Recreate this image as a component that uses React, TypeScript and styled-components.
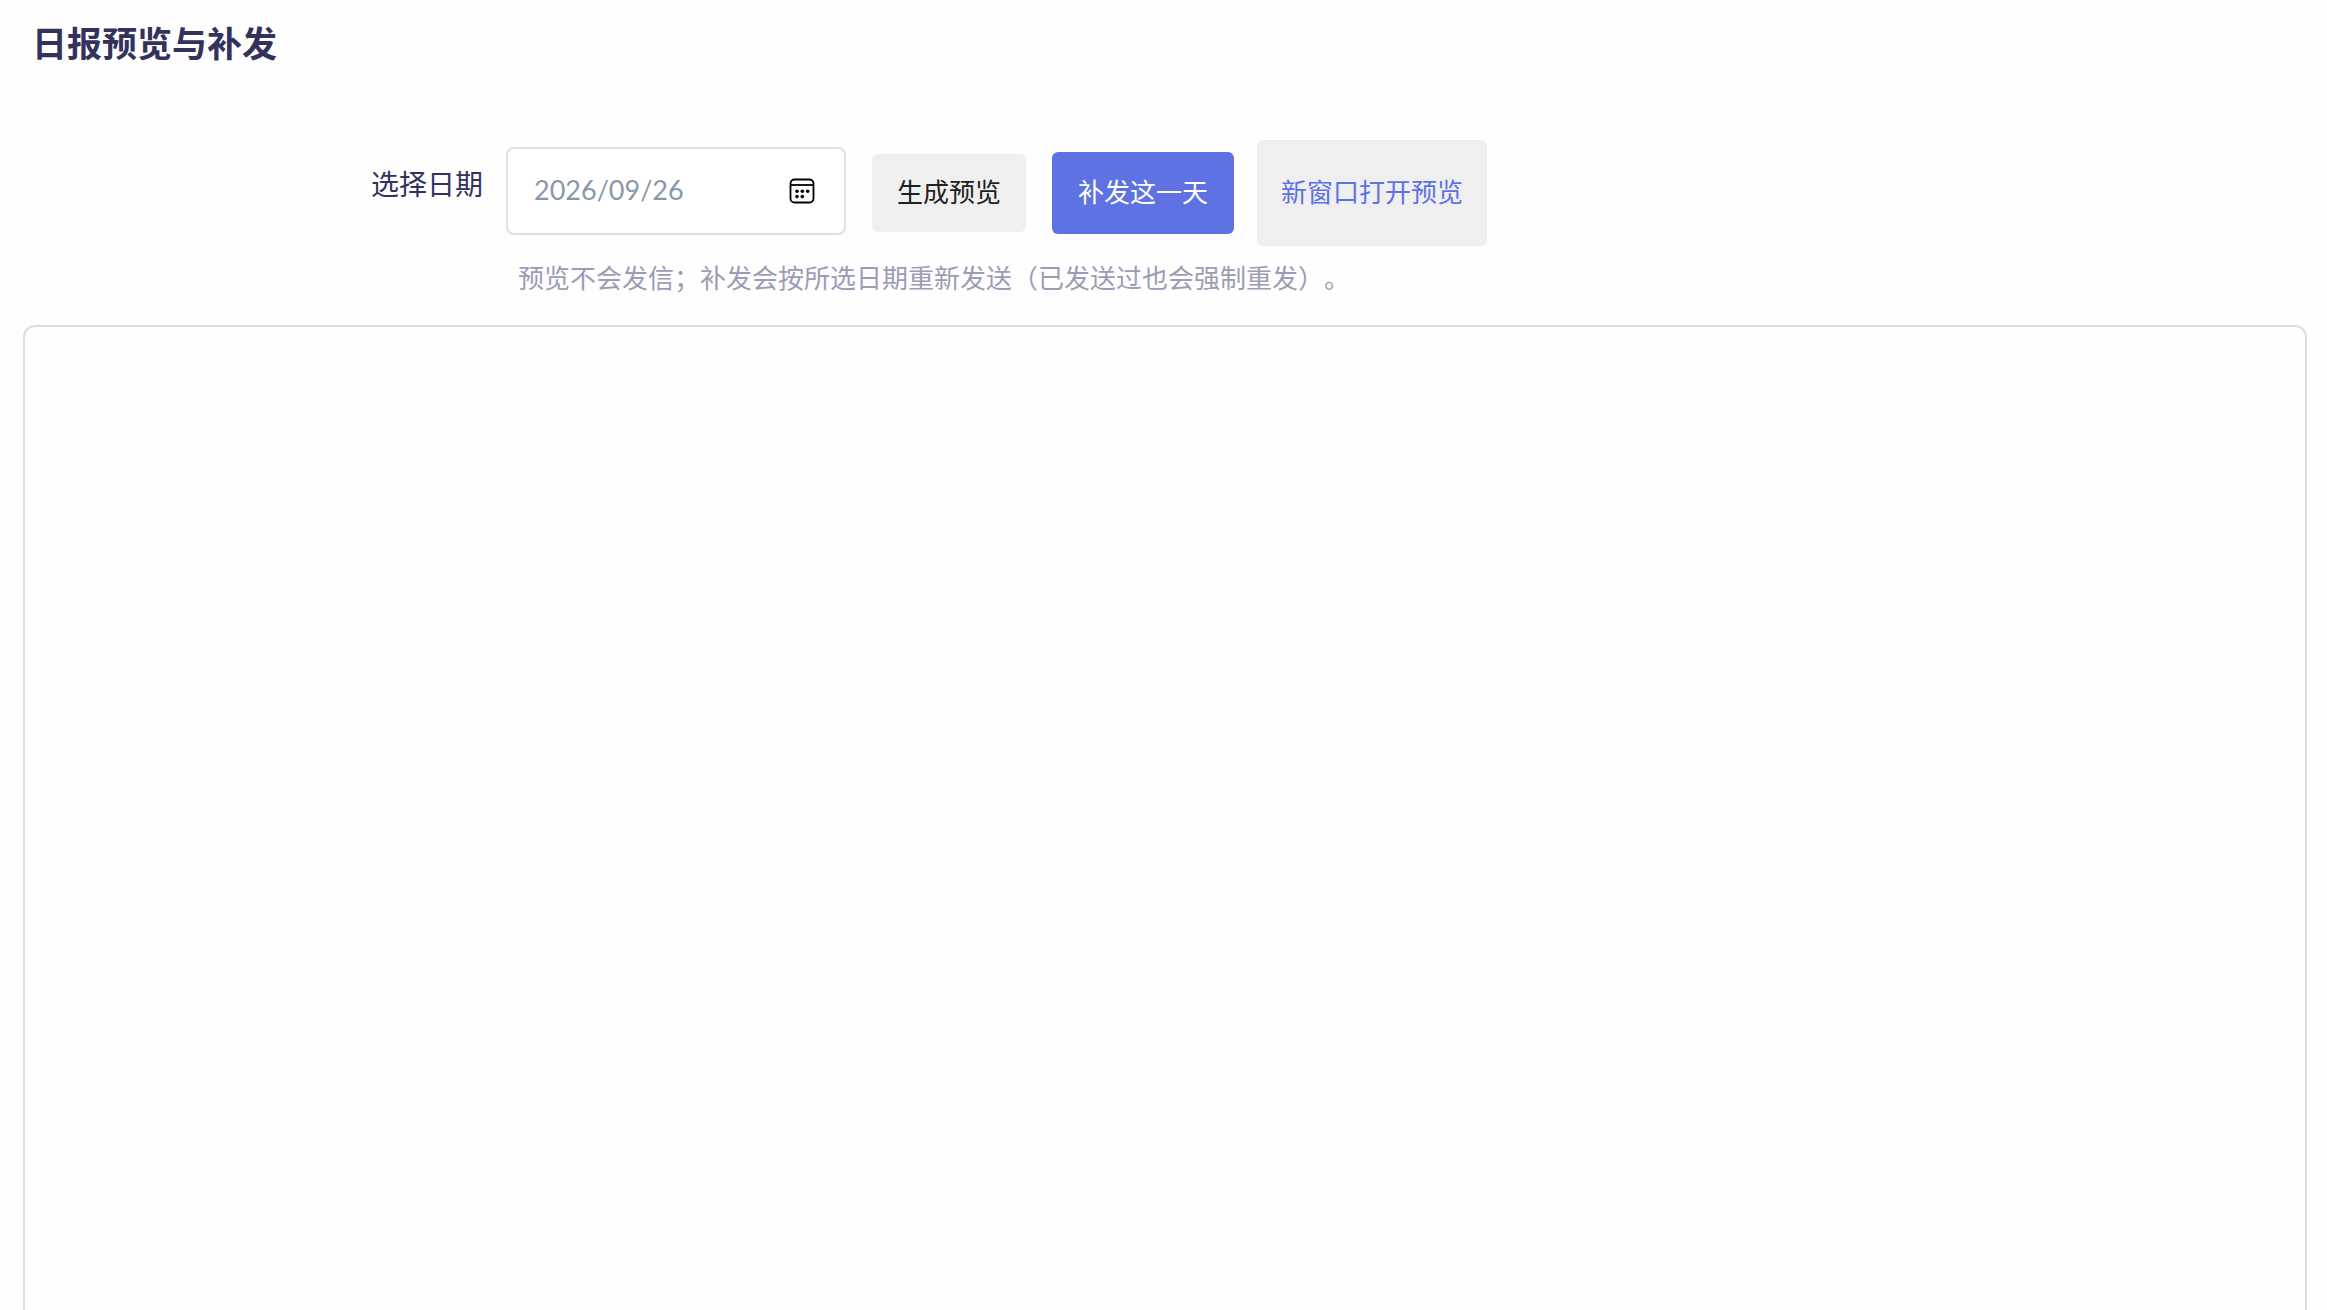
import React, { useState } from "react";
import styled, { createGlobalStyle } from "styled-components";

const GlobalStyle = createGlobalStyle`
  *, *::before, *::after { box-sizing: border-box; }
  body {
    margin: 0;
    background: #fefefe;
    color: #32325d;
    font-family: "Noto Sans CJK SC", sans-serif;
    font-size: 26px;
    text-spacing-trim: space-all;
  }
`;

const Page = styled.main`
  padding: 18px 20px 0 23px;
`;

const Title = styled.h1`
  margin: 0;
  padding: 0 9px;
  font-size: 35px;
  line-height: 48px;
  font-weight: 700;
`;

const Form = styled.form`
  display: grid;
  grid-template-columns: 483px 1fr;
  margin-top: 74px;
`;

const Label = styled.label`
  justify-self: end;
  align-self: center;
  padding: 0 23px 20px 0;
  font-size: 28px;
  line-height: 40px;
`;

const Controls = styled.div`
  display: flex;
  align-items: center;
  gap: 26px;
`;

const DateField = styled.div`
  display: flex;
  align-items: center;
  width: 340px;
  height: 88px;
  margin-bottom: 4px;
  padding: 0 29px 0 26px;
  border: 2px solid #dee2e6;
  border-radius: 8px;
  background: #fff;
`;

const DateInput = styled.input`
  flex: 1;
  min-width: 0;
  padding: 0 0 2px;
  border: 0;
  outline: 0;
  background: transparent;
  color: #8898aa;
  font-family: Lato, sans-serif;
  font-size: 27px;
  line-height: 40px;
`;

const PickerButton = styled.button`
  display: flex;
  padding: 0;
  border: 0;
  background: none;
  color: #000;
`;

const Button = styled.button<{ $primary?: boolean }>`
  padding: ${(p) => (p.$primary ? "19px 26px 23px" : "17px 25px 21px")};
  border: 0;
  border-radius: 6px;
  background: ${(p) => (p.$primary ? "#5e72e4" : "#efefef")};
  color: ${(p) => (p.$primary ? "#fff" : "#212121")};
  font: inherit;
  line-height: 40px;
  white-space: nowrap;
`;

const ButtonLink = styled.a`
  margin-left: -3px;
  padding: 31px 24px 35px;
  border-radius: 6px;
  background: #efefef;
  color: #5e72e4;
  line-height: 40px;
  text-decoration: none;
  white-space: nowrap;
`;

const Hint = styled.p`
  grid-column: 2;
  margin: 11px 0 0;
  padding-left: 12px;
  color: #9c9cb5;
  line-height: 40px;
`;

const Preview = styled.section`
  min-height: 1200px;
  margin-top: 28px;
  border: 2px solid #ddd;
  border-radius: 12px;
`;

const Viewport = styled.div`
  height: 100vh;
  overflow: hidden;
`;

function CalendarIcon() {
  return (
    <svg width="26" height="26" viewBox="0 0 26 26" fill="none" aria-hidden="true">
      <rect x="1.5" y="1.5" width="23" height="23" rx="4" stroke="currentColor" strokeWidth="1.8" />
      <path d="M1.5 7H24.5" stroke="currentColor" strokeWidth="1.8" />
      <g fill="currentColor">
        <circle cx="8" cy="13.2" r="1.8" />
        <circle cx="13.3" cy="13.2" r="1.8" />
        <circle cx="18.7" cy="13.2" r="1.8" />
        <circle cx="8" cy="18.6" r="1.8" />
        <circle cx="13.3" cy="18.6" r="1.8" />
      </g>
    </svg>
  );
}

export default function App() {
  const [date, setDate] = useState("2026/09/26");
  return (
    <Viewport>
      <GlobalStyle />
      <Page>
        <Title>日报预览与补发</Title>
        <Form onSubmit={(e) => e.preventDefault()}>
          <Label htmlFor="report-date">选择日期</Label>
          <Controls>
            <DateField>
              <DateInput id="report-date" value={date} onChange={(e) => setDate(e.target.value)} />
              <PickerButton type="button" aria-label="选择日期">
                <CalendarIcon />
              </PickerButton>
            </DateField>
            <Button type="submit">生成预览</Button>
            <Button type="button" $primary>补发这一天</Button>
            <ButtonLink href="#preview" target="_blank">新窗口打开预览</ButtonLink>
          </Controls>
          <Hint>预览不会发信；补发会按所选日期重新发送（已发送过也会强制重发）。</Hint>
        </Form>
        <Preview id="preview" aria-label="日报预览" />
      </Page>
    </Viewport>
  );
}
